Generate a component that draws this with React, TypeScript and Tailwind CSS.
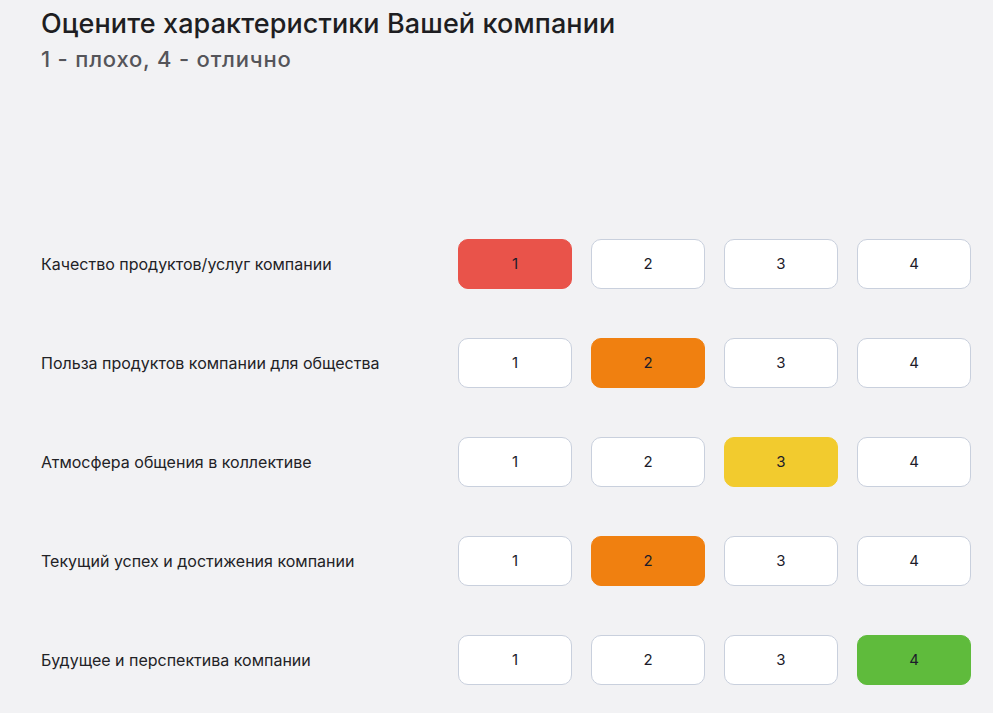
const rows = [
  { label: 'Качество продуктов/услуг компании', value: 1 },
  { label: 'Польза продуктов компании для общества', value: 2 },
  { label: 'Атмосфера общения в коллективе', value: 3 },
  { label: 'Текущий успех и достижения компании', value: 2 },
  { label: 'Будущее и перспектива компании', value: 4 },
];

const activeColors: Record<number, string> = {
  1: 'bg-[#e9534a] border-[#e9534a]',
  2: 'bg-[#f08010] border-[#f08010]',
  3: 'bg-[#f2cb2e] border-[#f2cb2e]',
  4: 'bg-[#5fbb3c] border-[#5fbb3c]',
};

export default function App() {
  return (
    <div
      className="min-h-[713px] bg-[#f2f2f4] pl-[41px] pr-[22px] pt-[6px]"
      style={{ fontFamily: 'Inter, "Noto Sans", sans-serif' }}
    >
      <h1 className="text-[27px] font-medium leading-[36px] tracking-[0.1px] text-[#1e1e22]">
        Оцените характеристики Вашей компании
      </h1>
      <p className="mt-[2px] text-[22px] font-medium leading-[30px] tracking-[0.8px] text-[#55555a]">
        1 - плохо, 4 - отлично
      </p>

      <div className="mt-[165px] flex flex-col gap-[49px]">
        {rows.map((row) => (
          <div key={row.label} className="flex items-center">
            <div className="flex-1 text-[16px] text-[#222226]">{row.label}</div>
            <div className="flex gap-[19px]">
              {[1, 2, 3, 4].map((n) => (
                <button
                  key={n}
                  className={
                    'h-[50px] w-[114px] rounded-[10px] border text-[15px] text-[#1c1c2a] ' +
                    (row.value === n ? activeColors[n] : 'border-[#c9d0dd] bg-white')
                  }
                >
                  {n}
                </button>
              ))}
            </div>
          </div>
        ))}
      </div>
    </div>
  );
}
